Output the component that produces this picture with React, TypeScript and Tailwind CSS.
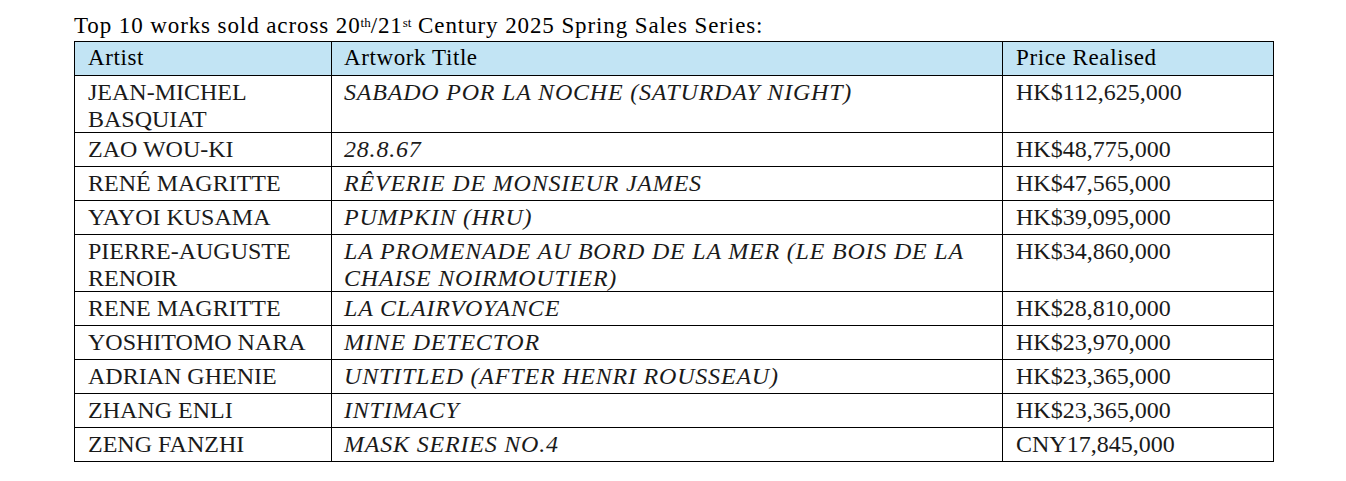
import React from "react";

const rows = [
  { artist: "JEAN-MICHEL BASQUIAT", title: "SABADO POR LA NOCHE (SATURDAY NIGHT)", price: "HK$112,625,000" },
  { artist: "ZAO WOU-KI", title: "28.8.67", price: "HK$48,775,000" },
  { artist: "RENÉ MAGRITTE", title: "RÊVERIE DE MONSIEUR JAMES", price: "HK$47,565,000" },
  { artist: "YAYOI KUSAMA", title: "PUMPKIN (HRU)", price: "HK$39,095,000" },
  { artist: "PIERRE-AUGUSTE RENOIR", title: "LA PROMENADE AU BORD DE LA MER (LE BOIS DE LA CHAISE NOIRMOUTIER)", price: "HK$34,860,000" },
  { artist: "RENE MAGRITTE", title: "LA CLAIRVOYANCE", price: "HK$28,810,000" },
  { artist: "YOSHITOMO NARA", title: "MINE DETECTOR", price: "HK$23,970,000" },
  { artist: "ADRIAN GHENIE", title: "UNTITLED (AFTER HENRI ROUSSEAU)", price: "HK$23,365,000" },
  { artist: "ZHANG ENLI", title: "INTIMACY", price: "HK$23,365,000" },
  { artist: "ZENG FANZHI", title: "MASK SERIES NO.4", price: "CNY17,845,000" },
];

const cell = "h-[34px] border border-black pt-[3px] pb-0 text-left align-top";

export default function App() {
  return (
    <div className="min-h-[481px] bg-white pl-[74px] pt-[12px] font-['Liberation_Serif',serif] text-[#1a1a1a]">
      <p className="mb-[2px] text-[23px] leading-[27px] tracking-[0.9px] text-black">
        Top 10 works sold across 20<sup className="text-[13px] tracking-normal">th</sup>/21<sup className="text-[13px] tracking-normal">st</sup> Century 2025 Spring Sales Series:
      </p>
      <table className="w-[1199px] table-fixed border-collapse text-[24px] leading-[26.5px]">
        <colgroup>
          <col className="w-[257px]" />
          <col className="w-[671px]" />
          <col className="w-[271px]" />
        </colgroup>
        <thead>
          <tr className="bg-[#c2e4f4] text-[23px] tracking-[0.6px] text-black">
            <th className={`${cell} px-[13px] font-normal`}>Artist</th>
            <th className={`${cell} px-[12px] font-normal`}>Artwork Title</th>
            <th className={`${cell} px-[13px] font-normal`}>Price Realised</th>
          </tr>
        </thead>
        <tbody>
          {rows.map((r, i) => (
            <tr key={i}>
              <td className={`${cell} px-[13px]`}>{r.artist}</td>
              <td className={`${cell} px-[12px] italic tracking-[0.8px]`}>{r.title}</td>
              <td className={`${cell} px-[13px]`}>{r.price}</td>
            </tr>
          ))}
        </tbody>
      </table>
    </div>
  );
}
